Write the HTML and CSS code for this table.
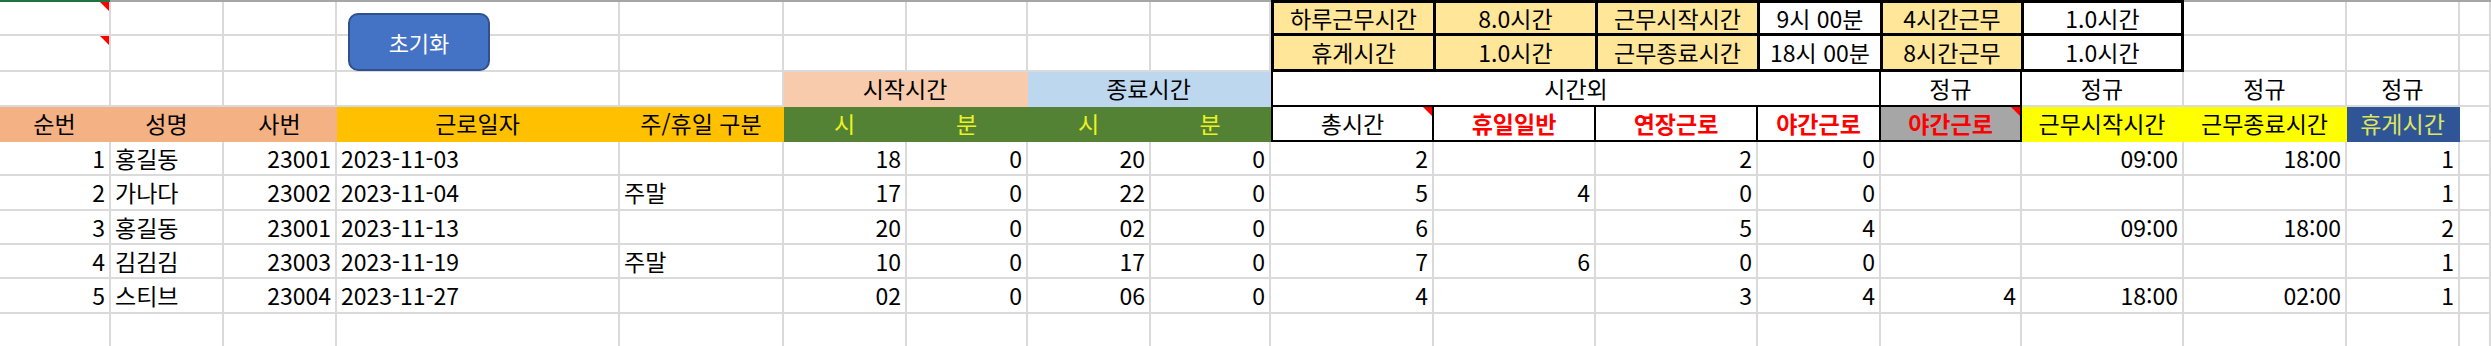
FILE: index.html
```html
<!DOCTYPE html>
<html lang="ko">
<head>
<meta charset="utf-8">
<title>근무시간 계산</title>
<link rel="stylesheet" href="styles.css">
</head>
<body>
<div class="sheet">
  <div class="topline"><span class="sel"></span></div>
  <div class="grid">
    <!-- row 1 -->
    <div class="c note"><i class="tri"></i></div><div class="c"></div><div class="c"></div><div class="c"></div><div class="c"></div><div class="c"></div><div class="c"></div><div class="c"></div><div class="c"></div>
    <div class="topbox">
      <div class="t y">하루근무시간</div><div class="t y">8.0시간</div><div class="t y">근무시작시간</div><div class="t">9시 00분</div><div class="t y">4시간근무</div><div class="t">1.0시간</div>
      <div class="t y">휴게시간</div><div class="t y">1.0시간</div><div class="t y">근무종료시간</div><div class="t">18시 00분</div><div class="t y">8시간근무</div><div class="t">1.0시간</div>
    </div>
    <div class="c"></div><div class="c"></div><div class="c"></div>
    <!-- row 2 -->
    <div class="c note"><i class="tri"></i></div><div class="c"></div><div class="c"></div><div class="c"></div><div class="c"></div><div class="c"></div><div class="c"></div><div class="c"></div><div class="c"></div>
    <div class="c"></div><div class="c"></div><div class="c"></div>
    <!-- row 3 -->
    <div class="c"></div><div class="c"></div><div class="c"></div><div class="c"></div><div class="c"></div>
    <div class="c m fill peach span2">시작시간</div>
    <div class="c m fill sky span2">종료시간</div>
    <div class="c m bx bl span4">시간외</div>
    <div class="c m bx">정규</div>
    <div class="c m">정규</div><div class="c m">정규</div><div class="c m">정규</div><div class="c"></div>
    <!-- row 4 -->
    <div class="c m fill salmon">순번</div><div class="c m fill salmon">성명</div><div class="c m fill salmon">사번</div>
    <div class="c m fill gold">근로일자</div><div class="c m fill gold">주/휴일 구분</div>
    <div class="c m fill green">시</div><div class="c m fill green">분</div><div class="c m fill green">시</div><div class="c m fill green">분</div>
    <div class="c m bx bl note">총시간<i class="tri"></i></div>
    <div class="c m bx red">휴일일반</div><div class="c m bx red">연장근로</div><div class="c m bx red">야간근로</div>
    <div class="c m bx red gray note">야간근로<i class="tri"></i></div>
    <div class="c m fill yel">근무시작시간</div><div class="c m fill yel">근무종료시간</div>
    <div class="c m fill navy">휴게시간</div><div class="c"></div>
    <!-- row 5 -->
    <div class="c r">1</div><div class="c">홍길동</div><div class="c r">23001</div><div class="c">2023-11-03</div><div class="c"></div>
    <div class="c r">18</div><div class="c r">0</div><div class="c r">20</div><div class="c r">0</div>
    <div class="c r">2</div><div class="c r"></div><div class="c r">2</div><div class="c r">0</div><div class="c r"></div>
    <div class="c r">09:00</div><div class="c r">18:00</div><div class="c r">1</div><div class="c"></div>
    <!-- row 6 -->
    <div class="c r">2</div><div class="c">가나다</div><div class="c r">23002</div><div class="c">2023-11-04</div><div class="c">주말</div>
    <div class="c r">17</div><div class="c r">0</div><div class="c r">22</div><div class="c r">0</div>
    <div class="c r">5</div><div class="c r">4</div><div class="c r">0</div><div class="c r">0</div><div class="c r"></div>
    <div class="c r"></div><div class="c r"></div><div class="c r">1</div><div class="c"></div>
    <!-- row 7 -->
    <div class="c r">3</div><div class="c">홍길동</div><div class="c r">23001</div><div class="c">2023-11-13</div><div class="c"></div>
    <div class="c r">20</div><div class="c r">0</div><div class="c r">02</div><div class="c r">0</div>
    <div class="c r">6</div><div class="c r"></div><div class="c r">5</div><div class="c r">4</div><div class="c r"></div>
    <div class="c r">09:00</div><div class="c r">18:00</div><div class="c r">2</div><div class="c"></div>
    <!-- row 8 -->
    <div class="c r">4</div><div class="c">김김김</div><div class="c r">23003</div><div class="c">2023-11-19</div><div class="c">주말</div>
    <div class="c r">10</div><div class="c r">0</div><div class="c r">17</div><div class="c r">0</div>
    <div class="c r">7</div><div class="c r">6</div><div class="c r">0</div><div class="c r">0</div><div class="c r"></div>
    <div class="c r"></div><div class="c r"></div><div class="c r">1</div><div class="c"></div>
    <!-- row 9 -->
    <div class="c r">5</div><div class="c">스티브</div><div class="c r">23004</div><div class="c">2023-11-27</div><div class="c"></div>
    <div class="c r">02</div><div class="c r">0</div><div class="c r">06</div><div class="c r">0</div>
    <div class="c r">4</div><div class="c r"></div><div class="c r">3</div><div class="c r">4</div><div class="c r">4</div>
    <div class="c r">18:00</div><div class="c r">02:00</div><div class="c r">1</div><div class="c"></div>
    <!-- row 10 -->
    <div class="c"></div><div class="c"></div><div class="c"></div><div class="c"></div><div class="c"></div><div class="c"></div>
    <div class="c"></div><div class="c"></div><div class="c"></div><div class="c"></div><div class="c"></div><div class="c"></div>
    <div class="c"></div><div class="c"></div><div class="c"></div><div class="c"></div><div class="c"></div><div class="c"></div>
  </div>
  <button class="reset" type="button">초기화</button>
</div>
</body>
</html>
```

FILE: styles.css
```css
* {
  box-sizing: border-box;
  margin: 0;
  padding: 0;
}

html, body {
  width: 2491px;
  height: 346px;
  overflow: hidden;
  background: #ffffff;
}

body {
  font-family: "Noto Sans CJK KR", "Noto Sans", sans-serif;
  font-size: 23px;
  color: #000;
}

.sheet {
  position: relative;
}

.topline {
  display: flex;
  height: 2px;
  background: #a6a6a6;
}

.topline .sel {
  width: 110px;
  background: #217346;
}

.grid {
  display: grid;
  grid-template-columns: 111px 113px 113px 283px 164px 123px 121px 123px 120px 163px 162px 162px 123px 141px 162px 163px 113px 1fr;
  grid-template-rows: 34px 36px 35px 35px 34px 35px 34px 34px 35px 34px;
}

.c {
  display: flex;
  align-items: center;
  justify-content: flex-start;
  min-width: 0;
  padding: 0 4px;
  border-right: 2px solid #dadada;
  border-bottom: 2px solid #dadada;
  line-height: 1;
  white-space: nowrap;
}

.r { justify-content: flex-end; }
.m { justify-content: center; }

.span2 { grid-column: span 2; }
.span4 { grid-column: span 4; }

.fill { border-color: transparent; }
.peach { background: #f8cbad; }
.sky { background: #bdd7ee; }
.salmon { background: #f4b183; }
.gold { background: #ffc000; }
.green { background: #548235; color: #ecf222; }
.yel { background: #ffff00; }
.navy { background: #2f5597; color: #dfe65e; }

.bx {
  border-right-color: #000;
  border-bottom-color: #000;
}

.bl { border-left: 2px solid #000; }

.red {
  color: #ff0000;
  font-weight: 700;
}

.gray { background: #a6a6a6; }

.note { position: relative; }

.tri {
  position: absolute;
  top: 0;
  right: 0;
  width: 0;
  height: 0;
  border-top: 9px solid #ff0000;
  border-left: 9px solid transparent;
}

.topbox {
  grid-column: 10 / 16;
  grid-row: 1 / 3;
  margin-top: -2px;
  display: grid;
  grid-template-columns: 159px 159px 159px 120px 138px 1fr;
  grid-template-rows: 30px 33px;
  gap: 3px;
  padding: 3px;
  background: #000;
}

.t {
  display: flex;
  align-items: center;
  justify-content: center;
  background: #ffffff;
  line-height: 1;
  white-space: nowrap;
}

.t.y { background: #ffe699; }

.reset {
  position: absolute;
  left: 348px;
  top: 13px;
  width: 142px;
  height: 58px;
  border: 2px solid #2f528f;
  border-radius: 10px;
  background: #4472c4;
  color: #ffffff;
  font-family: "Noto Sans CJK KR", "Noto Sans", sans-serif;
  font-size: 22px;
  line-height: 1;
}
```
